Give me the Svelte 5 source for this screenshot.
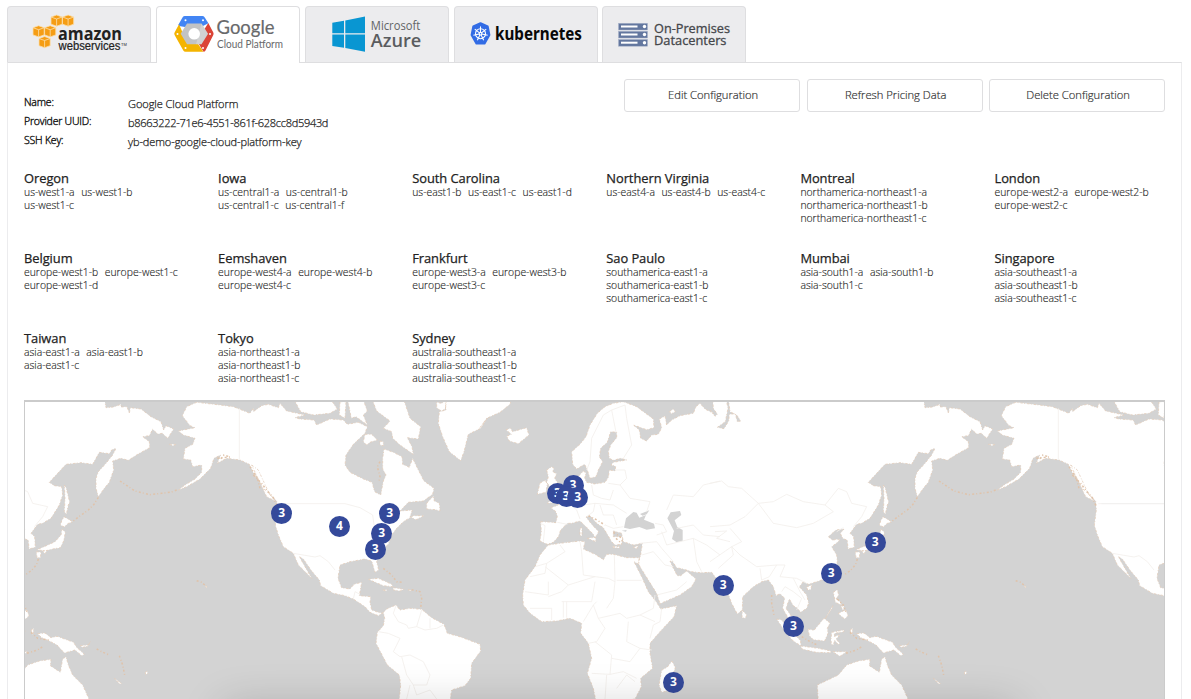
<script>
  const regions = [
    ['Oregon', ['us-west1-a us-west1-b', 'us-west1-c']],
    ['Iowa', ['us-central1-a us-central1-b', 'us-central1-c us-central1-f']],
    ['South Carolina', ['us-east1-b us-east1-c us-east1-d']],
    ['Northern Virginia', ['us-east4-a us-east4-b us-east4-c']],
    ['Montreal', ['northamerica-northeast1-a', 'northamerica-northeast1-b', 'northamerica-northeast1-c']],
    ['London', ['europe-west2-a europe-west2-b', 'europe-west2-c']],
    ['Belgium', ['europe-west1-b europe-west1-c', 'europe-west1-d']],
    ['Eemshaven', ['europe-west4-a europe-west4-b', 'europe-west4-c']],
    ['Frankfurt', ['europe-west3-a europe-west3-b', 'europe-west3-c']],
    ['Sao Paulo', ['southamerica-east1-a', 'southamerica-east1-b', 'southamerica-east1-c']],
    ['Mumbai', ['asia-south1-a asia-south1-b', 'asia-south1-c']],
    ['Singapore', ['asia-southeast1-a', 'asia-southeast1-b', 'asia-southeast1-c']],
    ['Taiwan', ['asia-east1-a asia-east1-b', 'asia-east1-c']],
    ['Tokyo', ['asia-northeast1-a', 'asia-northeast1-b', 'asia-northeast1-c']],
    ['Sydney', ['australia-southeast1-a', 'australia-southeast1-b', 'australia-southeast1-c']]
  ];

  const details = [
    ['Name:', 'Google Cloud Platform', 'name'],
    ['Provider UUID:', 'b8663222-71e6-4551-861f-628cc8d5943d', 'uuid'],
    ['SSH Key:', 'yb-demo-google-cloud-platform-key', 'key']
  ];

  const actions = ['Edit Configuration', 'Refresh Pricing Data', 'Delete Configuration'];

  // x and y of each pin's centre on the map canvas
  const pins = [
    [256.6, 111, 3], [314.5, 124.5, 4], [364.8, 111, 3], [356.8, 131, 3], [350.3, 147.6, 3],
    [532.5, 91, 3], [548, 83.5, 3], [541, 94, 3], [552.8, 95.5, 3],
    [850.2, 140.5, 3], [806.2, 171.5, 3], [698.2, 183.6, 3], [768.5, 224.5, 3], [648.5, 280.5, 3]
  ];

  const at = (off, s) => {
    const n = s.trim().split(/\s+/).map(Number);
    let out = '';
    for (let i = 0; i < n.length; i += 2) out += `${n[i] + off} ${n[i + 1]} `;
    return out;
  };

  // Tile origins along the x axis
  const P = 60, A = 750, E = 1440, S = 2130, B = 2820;

  const eurasia =
    at(E, '182 380 205 381 228 383 232 362 226 348 212 338 230 332 250 320 270 300 290 285 300 262 296 243 310 228 318 234 314 250 320 262 345 267 375 262 385 247 388 225 405 228 407 214 393 210 400 202 440 195 422 190 400 196 388 190 385 170 392 150 410 128 410 112 392 110 382 142 362 160 358 185 368 200 355 225 348 245 330 250 322 225 314 208 290 222 278 208 275 170 300 148 318 125 330 90 352 55 375 35 400 25 430 20 470 35 520 72 522 98 500 104 460 90 478 105 482 130 500 138 515 120 535 118 545 98 538 72 555 63 560 90 575 75 600 62 640 55 648 35 660 25 675 42 700 55') +
    at(S, '0 44 15 64 22 58 10 40 8 10 48 10 54 40 46 80 22 97 42 101 56 78 58 58 76 56 82 80 92 78 80 60 60 50 55 10 640 10 645 38 668 36 690 28') +
    at(B, '0 36 18 35 25 55 28 38 60 42 90 65 120 80 128 105 135 92 158 102 140 130 124 115 110 117 95 103 85 122 65 125 85 140 86 158 50 178 22 196 0 190') +
    at(S, '665 198 668 225 655 262 640 280 622 305 615 280 615 250 622 230 645 205 665 180 675 160 662 165 655 176 625 172 605 208 570 203 525 208 500 235 475 262 490 272 512 275 515 300 505 330 480 370 455 385 440 388 420 415 431 425 433 457 414 462 412 436 398 430 391 415 402 402 378 405 355 425 368 436 378 433 390 434 380 444 365 455 380 480 382 500 375 530 350 550 320 560 295 568 280 560 268 575 290 600 296 625 290 640 272 652 262 640 250 632 238 612 228 640 245 665 260 685 255 692 235 670 218 640 224 610 210 596 198 602 190 575 175 555 155 560 130 575 98 605 97 645 82 657 65 625 50 585 30 568 15 545 5 532') +
    at(E, '660 533 635 530 612 523 590 518 578 500 570 498 580 520 592 542 602 542 620 528 648 552 635 575 600 600 540 626 530 595 505 555 480 515 475 502 482 480 487 445 460 450 430 440 425 415 400 408 400 425 428 425 425 448 405 450 395 440 380 415 370 398 350 385 330 362 318 366 335 388 356 410 345 428 340 418 318 395 300 378 275 385 262 385 242 405 235 425 220 442 202 448 180 438 184 410');
  const africa = at(E, '205 450 240 445 300 438 315 440 310 462 345 478 370 494 380 478 400 478 440 488 478 488 476 508 462 500 485 545 505 590 530 622 542 642 590 632 582 665 540 710 510 745 510 775 518 820 482 850 484 875 465 912 350 930 340 880 322 835 335 790 325 745 302 715 305 685 270 670 230 678 185 680 150 655 130 630 128 600 135 555 165 515 180 480 200 455');
  const northAmerica =
    at(P, '530 22 500 35 487 62 510 92 525 98 475 108 490 120 525 130 518 148 495 160 490 192 512 195 518 215 545 210 545 232 525 252 495 270 475 285 500 275 540 252 572 220 582 190 602 180 592 205 620 190 660 195 688 208 708 250') +
    at(A, '15 235 40 280 80 318 82 345 76 390 85 420 100 455 130 475 145 510 185 550 165 515 148 485 160 492 185 528 208 555 212 572 250 595 285 602 310 612 345 635 360 652 385 662 400 652 404 670 400 692 382 712 378 745 412 810 448 840 452 870 446 930 598 930 605 885 645 872 662 850 665 805 692 768 690 748 632 726 592 715 582 688 545 668 515 643 480 640 450 645 438 630 410 642 398 655 385 652 365 645 360 622 362 605 328 602 335 562 312 568 300 582 275 578 264 550 270 510 300 500 345 492 365 498 375 532 386 525 380 500 390 470 415 448 425 420 440 400 460 380 490 362 522 362 498 374 480 365 487 345 450 348 475 322 520 318 548 298 552 280 522 258 505 225 488 190 478 217 458 208 456 185 430 172 402 162 398 190 398 222 408 240 400 258 392 300 374 290 366 262 340 252 300 232 285 210 288 180 310 148 345 115 352 95 325 82 292 88 280 75 240 72 200 90 192 75 150 72 135 68 165 60 110 48 90 25 85 38 55 28 35 32 10 50') +
    at(P, '700 40 690 55 640 35 600 30');
  const southIsles = at(S, '325 930 322 870 385 840 410 810 445 798 480 793 478 812 508 832 515 792 525 785 532 810 545 840 575 870 602 930');
  const greenland = at(A, '585 10 588 45 568 50 565 85 578 125 598 170 632 197 642 170 655 118 692 100 712 70') + at(E, '0 98 20 70 60 52 90 28 95 10');

  const islands = [
    at(E, '200 225 215 215 222 220 218 230 230 236 224 250 236 268 250 295 240 322 202 325 218 310 205 298 216 284 200 262 205 245'),
    at(E, '180 264 196 256 202 268 198 292 172 298'),
    at(E, '78 104 92 100 98 110 140 98 147 120 115 146 88 138 80 124 94 118'),
    at(E, '300 400 306 398 306 422 300 422'), at(E, '322 430 346 427 348 440'),
    at(E, '398 454 420 455 419 459 400 458'), at(E, '460 457 475 452 470 461'),
    at(E, '568 50 580 42 586 50 574 56'),
    at(E, '576 798 586 818 574 850 560 888 545 892 537 870 545 826 562 816'),
    at(A, '365 10 380 48 420 78 400 100 425 110 428 130 450 150 490 178 486 155 472 128 505 132 512 95 480 70 460 10'),
    at(A, '130 10 152 50 190 60 240 55 262 42 240 10'), at(A, '270 20 288 20 285 70 268 60'),
    at(A, '294 20 310 10 340 15 352 48 340 60 352 90 318 65 304 70'),
    at(A, '345 118 365 118 382 135 360 142 350 150 340 140'), at(A, '390 138 400 140 400 152 390 150'),
    at(A, '530 325 550 303 553 318 568 325 570 348 556 344 530 342'),
    at(A, '355 553 385 550 425 568 428 575 400 572'), at(A, '430 578 462 583 450 588 430 585'), at(A, '398 585 412 584 408 588'), at(A, '474 584 484 585 482 588'),
    at(A, '590 14 575 25 560 22 560 38 574 48 586 42'),
    at(A, '5 210 25 225 55 290 75 318 50 305'),
    at(S, '519 365 545 380 530 386 520 396 508 390 512 378'),
    at(S, '513 402 523 412 518 438 508 458 485 462 462 468 438 464 466 452 492 440 510 420'),
    at(S, '436 470 450 472 448 488 438 488'), at(S, '455 468 468 466 462 476'),
    at(S, '520 270 526 280 536 322 532 330 526 358 520 350 522 310'),
    at(S, '290 576 306 570 302 584 293 585'), at(S, '378 525 386 528 384 545'),
    at(S, '370 592 382 584 386 600 378 612 392 622 394 630 376 622'),
    at(S, '385 655 408 645 414 662 404 672 392 662'), at(S, '392 632 402 634 400 648'), at(S, '345 672 366 640 368 632'),
    at(S, '294 702 312 706 342 670 360 684 352 700 354 715 344 738 310 734 298 722'),
    at(S, '200 672 215 675 272 738 272 752 250 738 226 712'),
    at(S, '272 753 325 760 362 768 362 773 318 772 276 762'),
    at(S, '365 712 402 705 402 710 374 715 372 724 390 720 378 732 390 746 384 748 374 736 370 750 364 748 363 732'),
    at(S, '368 770 410 770 390 784'), at(S, '420 705 428 700 426 720'),
    at(S, '440 716 462 714 480 728 498 724 548 742 556 756 580 778 572 782 552 765 520 774 498 750 475 738 452 728'),
    at(S, '568 752 592 750 598 740 590 754 574 757'), at(S, '670 850 692 866 686 867'),
    at(S, '97 646 110 660 106 670 96 668'), at(B, '73 832 78 828 80 836 74 838'), at(B, '252 574 258 573 258 579'),
    at(B, '145 148 165 148 156 152')
  ];

  const waters = [
    at(E, '432 398 438 370 460 351 470 353 478 368 498 360 492 374 522 386 525 400 500 404 478 396 450 402'),
    at(E, '480 357 508 346 500 358 488 362'), at(E, '425 407 440 405 438 410'),
    at(E, '562 370 572 352 600 348 604 360 584 376 592 396 608 405 608 438 590 442 576 432 582 408')
  ];

  const archipelagos = [
    at(P, '470 285 455 291 425 295 390 299 345 288 300 258'),
    at(P, '235 307 222 328 205 345 170 370 155 382'), at(P, '55 492 50 508 35 526 15 540'),
    at(P, '530 557 545 562 560 575'), at(P, '230 762 245 770 268 780'), at(P, '298 782 308 810 314 840'),
    at(A, '400 520 425 540 440 560 460 562'), at(A, '485 584 510 590 515 610 512 640'), at(A, '390 200 382 215 390 245 386 262'),
    at(E, '325 362 345 372 375 390'), at(E, '400 412 420 425 430 442'), at(E, '408 430 425 446'), at(S, '185 600 185 625 193 665'),
    at(S, '275 725 300 740 322 750'), at(S, '382 612 400 630 408 650'), at(S, '420 712 440 730 475 735'), at(S, '408 775 440 765 455 755'),
    at(P, '592 190 630 186 612 180 600 195'), at(P, '690 215 712 250 720 280'), at(A, '10 240 35 265 50 285 70 308 82 335')
  ];

  const borders = [
    at(P, '658 40 658 195'), at(A, '88 326 285 326 330 338 368 360 372 390'), at(A, '130 475 195 486 210 482 235 500 255 525'),
    at(A, '310 612 315 590 330 598'), at(A, '438 632 430 655 445 680 470 690 475 700 500 695 525 705 560 700 580 690'),
    at(A, '385 710 415 715 450 730 430 770 450 785 480 780 520 800 540 840 530 870 490 870 470 840 455 785'),
    at(A, '515 645 500 695'), at(A, '540 670 540 700'), at(A, '490 870 500 900 540 885 560 912'), at(A, '470 912 480 870'),
    at(E, '182 385 195 392 190 440'), at(E, '232 382 262 388'), at(E, '320 225 330 200 335 130 370 60 395 45 408 112'),
    at(E, '395 45 435 30 440 70 455 150 430 190'), at(E, '405 225 435 225 440 250 420 270 385 265'), at(E, '335 270 340 300 365 310 390 315 400 285'),
    at(E, '420 270 450 310 510 320 500 350'), at(E, '290 340 310 330 345 325 400 330 440 355'), at(E, '260 318 290 345 300 372'), at(E, '345 325 340 350 320 365'),
    at(E, '360 330 370 360 400 360 410 390'), at(E, '375 390 400 400 430 395'), at(E, '480 445 530 440 545 460 580 500'), at(E, '485 480 520 470 555 510 580 515'),
    at(E, '525 385 550 390 560 410 530 420'), at(E, '545 410 560 450 640 430 680 450 720 480'), at(E, '560 345 580 300 640 305 670 270 720 258'),
    at(E, '590 400 640 390 670 420 720 425'), at(E, '640 430 650 500 665 530'), at(E, '530 600 590 585 620 560'),
    at(E, '165 515 200 505 255 470 240 450'), at(E, '200 505 195 535 150 545'), at(E, '195 515 265 570 345 545 385 550 405 560'), at(E, '300 440 305 470 310 540 345 545'),
    at(E, '403 480 405 560 400 610 380 640'), at(E, '410 556 485 556'), at(E, '135 590 205 600 205 560'), at(E, '205 605 245 590 265 570'),
    at(E, '150 640 180 640 215 640 215 675'), at(E, '245 620 335 620 345 560'), at(E, '250 620 250 668'), at(E, '260 620 260 668'), at(E, '310 680 340 630 350 620'),
    at(E, '340 630 355 670 420 655 440 670 480 660 525 680'), at(E, '525 600 520 640 480 660'), at(E, '545 640 540 680 520 690 510 730'),
    at(E, '325 745 350 740 375 700 355 670'), at(E, '335 835 390 838 430 830 470 850'), at(E, '390 838 395 780 345 740'), at(E, '395 790 450 800 480 760 440 740 445 680'),
    at(E, '375 912 380 840'), at(E, '480 760 515 765'), at(E, '410 880 440 840 465 860'),
    at(S, '0 265 35 258 55 275 95 280 145 325 105 365 60 390 0 395'), at(S, '145 325 190 320 230 298 280 320 345 330 370 350 310 385 260 398 190 385 145 325'),
    at(S, '345 330 385 280 410 290 425 325 470 335 455 365 430 395'), at(S, '90 480 65 455 95 440 60 400'), at(S, '90 480 140 515 200 510 225 510 210 545 260 550 290 565'),
    at(S, '25 520 70 480 65 455 0 500'), at(S, '150 520 155 555 178 545 200 510'), at(S, '215 590 225 575 250 590 275 610 260 645'), at(S, '250 550 270 590 285 615'),
    at(S, '15 410 50 408 20 430 60 440'), at(S, '400 398 380 410')
  ];
  const worlds = [-2457, 0, 2457];
</script>

<div class="page">
  <nav>
    <div class="tab">
      <svg width="142" height="55" viewBox="0 0 142 55">
        <g stroke="#fbe0ae" stroke-width=".8" fill="#f59d14">
          {#each [[43, 8], [54.5, 8], [25, 18.7], [36.6, 18.7], [31, 29.5]] as [x, y]}
            <path d="M{x} {y + 2}l5.600-2 5.600 2v7.200l-5.600 2-5.600-2z" />
            <path d="M{x} {y + 2}l5.600 2 5.600-2M{x + 5.6} {y + 4}v7.200" fill="none" />
          {/each}
        </g>
        <text class="aws" x="50" y="32.500" textLength="64" lengthAdjust="spacingAndGlyphs">amazon</text>
        <text class="aws-sub" x="50.500" y="43.300" textLength="62" lengthAdjust="spacingAndGlyphs">webservices</text>
        <text class="tm" x="113" y="38.500">TM</text>
      </svg>
    </div>
    <div class="tab active">
      <svg width="142" height="55" viewBox="0 0 142 55">
        <path fill="#4285f4" d="M21.500 17.500 25.800 10q.6-1 2-1h17.700q1.200 0 1.900 1l4 6.200L40 22l-18-3z" />
        <path fill="#db4437" d="M51.300 16 56.300 25.500q.6 1.200 0 2.500L48.500 43.500q-.6 1.300-2 1.300L40 34z" />
        <path fill="#f4b400" d="M22 17.300 17.600 25.500q-.7 1.200 0 2.500l8.700 15.500q.8 1.300 2.200 1.300h17.800l-6-9-12-4z" />
        <path fill="#c2c3c4" d="M30 16.500h14.500l6.500 10.200-6.500 10.600H30L23.700 26.700z" />
        <path fill="#fff" opacity=".25" d="M44.500 16.500 51 26.700l-6.500 10.600H39z" />
        <circle cx="37.200" cy="26.800" r="5.800" fill="#fff" />
        <g fill="#fff"><circle cx="28.500" cy="13.200" r="1" /><circle cx="46" cy="13.200" r="1" /><circle cx="53" cy="27" r="1" /><circle cx="20.500" cy="27" r="1" /><circle cx="28.500" cy="41" r="1" /><circle cx="46" cy="41" r="1" /></g>
        <text class="google" x="59.500" y="27" textLength="58" lengthAdjust="spacingAndGlyphs">Google</text>
        <text class="gcp" x="60" y="40.500" textLength="66" lengthAdjust="spacingAndGlyphs">Cloud Platform</text>
      </svg>
    </div>
    <div class="tab">
      <svg width="142" height="55" viewBox="0 0 142 55">
        <path fill="#0996d2" d="M26.300 15.700 38 13.800v12.400H26.300zM39.300 13.500 59 9.500v16.700H39.300zM26.300 27.500H38v13.300l-11.700-1.900zM39.300 27.500H59v17.300L39.300 41z" />
        <text class="micro" x="64.800" y="23" textLength="49.500" lengthAdjust="spacingAndGlyphs">Microsoft</text>
        <text class="azure" x="64.800" y="39.500" textLength="50.500" lengthAdjust="spacingAndGlyphs">Azure</text>
      </svg>
    </div>
    <div class="tab">
      <svg width="142" height="55" viewBox="0 0 142 55">
        <path fill="#326ce5" stroke="#326ce5" stroke-width="2" stroke-linejoin="round" d="M25.500 16.200 32.700 19.500 34.400 28 29.600 36.400H21.400L16.600 28 18.300 19.500z" />
        <g fill="none" stroke="#fff" stroke-width="1.100" transform="translate(25.500 26.700)">
          <circle r="5" />
          {#each [0, 1, 2, 3, 4, 5, 6] as i}<path d="M0-1.300V-7.300" transform="rotate({i * 51.43})" />{/each}
          <circle r="1.300" />
        </g>
        <text class="kube" x="40" y="33.300" textLength="87" lengthAdjust="spacingAndGlyphs">kubernetes</text>
      </svg>
    </div>
    <div class="tab">
      <svg width="142" height="55" viewBox="0 0 142 55">
        {#each [16.300, 24.300, 32.500] as y}
          <rect x="15.500" y={y} width="29" height="6.700" fill="#63779f" stroke="#a9b3c9" stroke-width=".5" />
          <rect x="18" y={y + 2.200} width="16.500" height="2" fill="#fff" />
          <circle cx="41.500" cy={y + 3.200} r="1.700" fill="#fff" />
        {/each}
        <text class="prem" x="51" y="26.300" textLength="76" lengthAdjust="spacingAndGlyphs">On-Premises</text>
        <text class="prem" x="51" y="38" textLength="72.500" lengthAdjust="spacingAndGlyphs">Datacenters</text>
      </svg>
    </div>
  </nav>

  <main>
    <header>
      <dl>
        {#each details as [k, v, c]}<div><dt>{k}</dt><dd class={c}>{v}</dd></div>{/each}
      </dl>
      <div class="actions">
        {#each actions as a}<button>{a}</button>{/each}
      </div>
    </header>

    <section class="regions">
      {#each regions as [name, lines]}
        <article>
          <h4>{name}</h4>
          {#each lines as line}
            <p>{#each line.split(' ') as z}<span>{z}</span>{/each}</p>
          {/each}
        </article>
      {/each}
    </section>

    <div class="map">
      <svg width="1140" height="298" viewBox="75 21 3420 894">
        {#each worlds as dx}
          <g transform="translate({dx})">
            <g class="land">
              {#each [eurasia, africa, northAmerica, southIsles, greenland, ...islands] as pts}<polygon points={pts} />{/each}
            </g>
            <g class="water">{#each waters as pts}<polygon points={pts} />{/each}</g>
            <g class="coast">
              {#each [eurasia, africa, northAmerica, southIsles, greenland, ...islands] as pts}<polygon points={pts} />{/each}
            </g>
            <g class="chain">{#each archipelagos as pts}<polyline points={pts} />{/each}</g>
            <g class="border">{#each borders as pts}<polyline points={pts} />{/each}</g>
          </g>
        {/each}
        <path d="M3304 326H3495" stroke="#eee" stroke-width="2" />
      </svg>
      {#each pins as [x, y, n]}
        <b class="pin" style="left:{x}px;top:{y}px">{n}</b>
      {/each}
      <div class="shade"></div>
    </div>
  </main>
</div>

<style>
  :global(body) { background: #fff; overflow: hidden; }
  .page { box-sizing: border-box; height: 699px; padding: 6px 9px 0 7px; overflow: hidden; display: flex; flex-direction: column; font-family: "Open Sans", sans-serif; color: #333; }
  nav { display: flex; gap: 4.850px; height: 56px; flex: none; }
  .tab { box-sizing: border-box; width: 144px; height: 56px; border: 1px solid #dedee0; border-bottom: 0; border-radius: 4px 4px 0 0; background: #ececee; }
  .tab.active { background: #fff; height: 57px; position: relative; z-index: 1; }
  .tab svg { display: block; }
  .aws { font: bold 18.500px "Open Sans", sans-serif; fill: #222; }
  .aws-sub { font: 12px "Liberation Sans", sans-serif; fill: #222; stroke: #222; stroke-width: .2; }
  .tm { font: 4px "Liberation Sans", sans-serif; fill: #222; }
  .google { font: 19.500px Lato, sans-serif; fill: #68696b; stroke: #68696b; stroke-width: .2; }
  .gcp { font: 10.500px Lato, sans-serif; fill: #68696b; }
  .micro { font: 12px "Open Sans", sans-serif; fill: #626466; }
  .azure { font: 600 18.500px "Open Sans", sans-serif; fill: #5a5c5f; }
  .kube { font: bold 18.500px "Noto Sans", sans-serif; fill: #080808; }
  .prem { font: 13px "Open Sans", sans-serif; fill: #45474b; stroke: #45474b; stroke-width: .3; }
  main { box-sizing: border-box; width: 1175px; height: 700px; flex: none; border: 1px solid #e4e4e6; border-color: #dedee0 #ececee; padding: 16px 16px 0; }
  header { display: flex; justify-content: space-between; height: 91px; }
  dl { margin: 14px 0 0; font-size: 11px; font-weight: 300; }
  dl div { display: flex; height: 19px; line-height: 19px; }
  dt { width: 104px; font-size: 10.500px; letter-spacing: -.2px; color: #222; -webkit-text-stroke: .4px #222; }
  dd { margin: 1px 0 0; color: #222; -webkit-text-stroke: .25px #222; }
  .name { letter-spacing: -.07px; }
  .uuid { letter-spacing: -.29px; }
  .key { letter-spacing: -.1px; }
  .actions { display: flex; gap: 6.700px; }
  button { box-sizing: border-box; width: 175.800px; height: 33px; border: 1px solid #dedee0; border-radius: 3px; background: #fff; padding: 0 0 2px 2px; font: 300 11.200px "Open Sans", sans-serif; color: #333; -webkit-text-stroke: .2px #333; }
  .regions { display: grid; grid-template-columns: repeat(6, 194.100px); grid-auto-rows: 80px; height: 230px; }
  h4 { margin: 0; font-size: 12.900px; line-height: 17px; font-weight: 400; letter-spacing: -.05px; color: #222; -webkit-text-stroke: .25px #222; }
  h4 + p { margin-top: -1px; }
  p { margin: 0; font-size: 10.400px; line-height: 13px; height: 13px; font-weight: 300; color: #222; -webkit-text-stroke: .14px #222; display: flex; gap: 6.500px; white-space: nowrap; }
  .map { position: relative; box-sizing: border-box; width: 1141px; height: 310px; border: solid #cbcbcb; border-width: 2px 1px 0; background: #d3d3d3; overflow: hidden; }
  .map svg { display: block; }
  .land { fill: #fff; }
  .water { fill: #d3d3d3; }
  .coast { fill: none; stroke: #e3cdba; stroke-width: 2.400; stroke-dasharray: 7 6 3 4; }
  .chain { fill: none; stroke: #e0c3aa; stroke-width: 4.500; stroke-dasharray: 6 7 3 6; }
  .border { fill: none; stroke: #f3efec; stroke-width: 2.500; stroke-linejoin: round; }
  .pin { position: absolute; width: 21px; height: 21px; margin: -10.500px 0 0 -10.500px; border-radius: 50%; background: #34499a; color: #fff; font-size: 12px; line-height: 20px; text-align: center; font-weight: 700; }
  .shade { position: absolute; left: 205px; top: 312px; width: 780px; height: 20px; box-shadow: 0 0 44px 6px rgba(0, 0, 0, .22); }
</style>
